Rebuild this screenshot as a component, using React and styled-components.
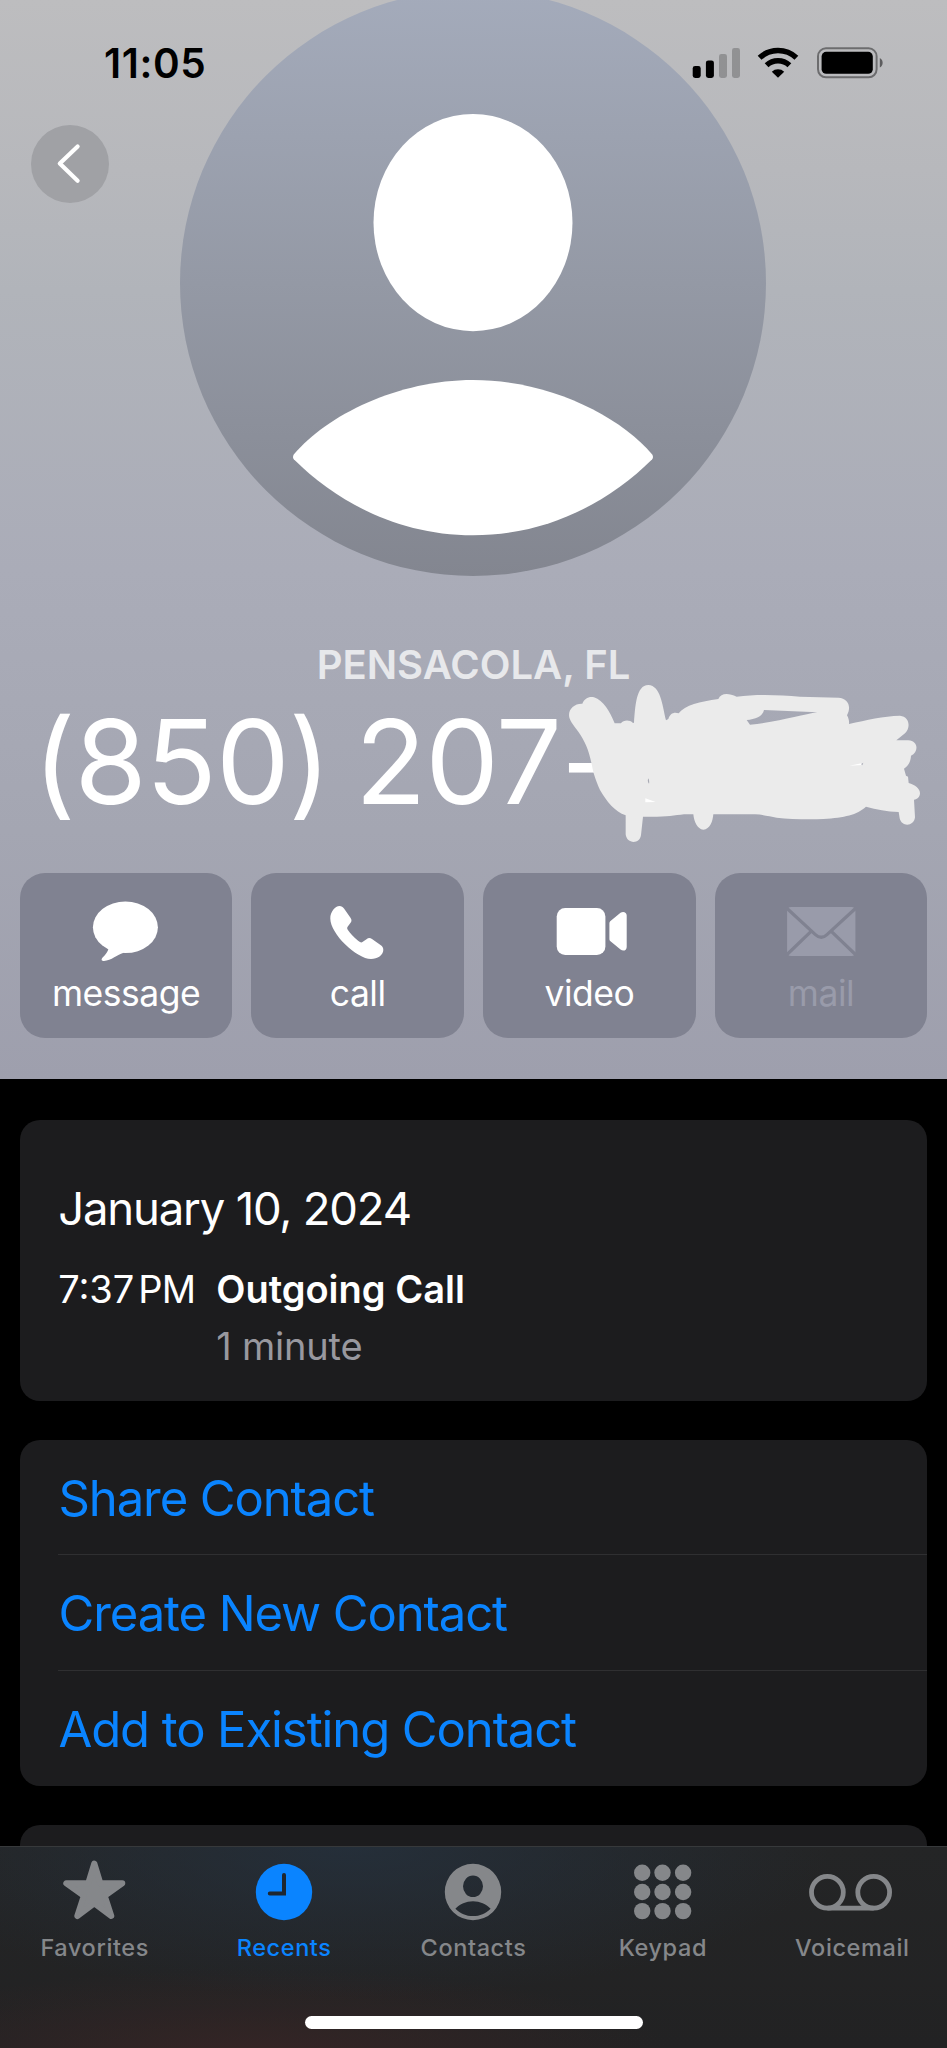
import React from 'react';
import styled, { createGlobalStyle } from 'styled-components';

const COLORS = {
  white: '#ffffff',
  black: '#000000',
  blue: '#0a84ff',
  card: '#1c1c1e',
  divider: '#2f2f31',
  secondary: '#98989f',
  tile: '#808291',
  tileDisabled: '#999baa',
  tab: '#85878a',
  scribble: '#ebebeb',
};

const actions = [
  { id: 'message', label: 'message' },
  { id: 'call', label: 'call' },
  { id: 'video', label: 'video' },
  { id: 'mail', label: 'mail', disabled: true },
];

const links = ['Share Contact', 'Create New Contact', 'Add to Existing Contact'];

const tabs = [
  { id: 'favorites', label: 'Favorites' },
  { id: 'recents', label: 'Recents', active: true },
  { id: 'contacts', label: 'Contacts' },
  { id: 'keypad', label: 'Keypad' },
  { id: 'voicemail', label: 'Voicemail' },
];

const App = () => (
  <Screen>
    <GlobalStyle />
    <Header>
      <Avatar />
      <Overlay>
        <StatusBar>
          <Time>11:05</Time>
          <StatusIcons />
        </StatusBar>
        <BackButton aria-label="Back">
          <svg width="78" height="78" viewBox="0 0 78 78">
            <path d="M46.6 21.5 28.8 38.5 46.6 55.7" fill="none" stroke="#fff" strokeWidth="4.2" strokeLinecap="round" strokeLinejoin="round" />
          </svg>
        </BackButton>
      </Overlay>
      <Location>PENSACOLA, FL</Location>
      <Phone>
        (850) 207-
        <Scribble />
      </Phone>
      <Actions>
        {actions.map(({ id, label, disabled }) => (
          <Action key={id} disabled={disabled}>
            <ActionIcon id={id} />
            {label}
          </Action>
        ))}
      </Actions>
    </Header>

    <Content>
      <CallCard>
        <CallDate>January 10, 2024</CallDate>
        <CallRow>
          <CallTime>
            7:37<Meridiem>PM</Meridiem>
          </CallTime>
          <div>
            <CallType>Outgoing Call</CallType>
            <CallDuration>1 minute</CallDuration>
          </div>
        </CallRow>
      </CallCard>
      <Card>
        {links.map((link) => (
          <LinkRow key={link}>{link}</LinkRow>
        ))}
      </Card>
      <NextCard />
    </Content>

    <TabBar>
      <Tabs>
        {tabs.map(({ id, label, active }) => (
          <Tab key={id} $active={active}>
            <TabIcon id={id} />
            {label}
          </Tab>
        ))}
      </Tabs>
      <HomeIndicator />
    </TabBar>
  </Screen>
);

const Avatar = () => (
  <AvatarSvg width="586" height="586" viewBox="0 0 586 586">
    <defs>
      <linearGradient id="avatar-fill" x1="0" y1="0" x2="0" y2="1">
        <stop offset="0" stopColor="#a4abbb" />
        <stop offset="0.5" stopColor="#9499a5" />
        <stop offset="1" stopColor="#838690" />
      </linearGradient>
    </defs>
    <circle cx="293" cy="293" r="293" fill="url(#avatar-fill)" />
    <ellipse cx="293" cy="232.6" rx="99.5" ry="108.6" fill="#fff" />
    <path
      d="M113.8 464.5C147 425 218 390 293 390S439 425 472.2 464.5Q473.8 467 472.2 469.2C429 512 368 545.3 293 545.3S157 512 113.8 469.2Q112.2 467 113.8 464.5Z"
      fill="#fff"
    />
  </AvatarSvg>
);

const StatusIcons = () => (
  <svg width="192" height="34" viewBox="0 0 192 34">
    <rect x="0.7" y="20" width="8" height="12" rx="2.4" />
    <rect x="13.9" y="14.4" width="8" height="17.6" rx="2.4" />
    <g opacity="0.22">
      <rect x="27" y="8" width="8" height="24" rx="2.4" />
      <rect x="40" y="2" width="8" height="30" rx="2.4" />
    </g>
    <g fill="none" stroke="#000" strokeWidth="5.6">
      <path d="M67.6 11.8A27 27 0 0 1 104.4 11.8" />
      <path d="M74.6 19.2A16.8 16.8 0 0 1 97.4 19.2" />
    </g>
    <path d="M86 31.7 79.8 25.7A9 9 0 0 1 92.2 25.7Z" />
    <rect x="126" y="2.3" width="58.6" height="29" rx="8" fill="none" stroke="#000" strokeOpacity="0.42" strokeWidth="2" />
    <rect x="129.6" y="5.8" width="51.2" height="22" rx="4.6" />
    <path d="M187.8 12C191.6 14 191.6 19.6 187.8 21.6Z" opacity="0.5" />
  </svg>
);

// marker strokes hiding the last four digits
const Scribble = () => (
  <ScribbleSvg width="407" height="200" viewBox="0 0 1221 600">
    <path
      fill={COLORS.scribble}
      fillRule="evenodd"
      d="M87 165C87 145 105 130 127 131C133 115 148 108 162 112C190 122 210 155 224 190L243 190C250 180 268 178 279 189L282 188C286 140 288 75 325 75C362 78 366 130 378 181L385 177C390 160 402 155 416 160C435 135 480 125 535 117C543 98 565 98 590 110C650 102 720 105 780 110L895 113C925 115 935 140 921 166C926 175 928 183 927 192C980 180 1030 168 1080 167C1110 170 1112 205 1095 220L1069 241L1105 241C1135 243 1137 275 1113 287C1112 305 1105 318 1092 326L1098 347L1104 350L1106 369C1125 375 1140 385 1140 400C1139 412 1132 418 1122 419L1125 472C1122 500 1085 502 1079 475L1076 456C1040 455 1010 448 978 440C950 465 915 472 850 477C800 479 750 477 710 473C690 470 670 464 645 463L520 463C518 485 510 508 490 509C472 508 462 485 460 463L432 463C400 467 370 472 309 470L303 525C300 553 260 553 257 523L257 466C225 455 200 425 180 390C165 355 160 340 155 312C145 265 135 245 115 215C100 195 87 180 87 165ZM620 180C645 178 668 170 672 150L832 157C790 163 720 185 630 194Z"
    />
    <path d="M316 415 347 426 316 427ZM928 317 968 309 966 315Z" fill="#fff" />
    <path d="M325 355Q329 363 327 371Q321 364 325 355ZM963 312 970 308 967 316Z" fill="#a9abb5" />
  </ScribbleSvg>
);

const ActionIcon = ({ id }) => (
  <svg width="76" height="60" viewBox="-3 0 76 60" fill="currentColor">
    {id === 'message' && (
      <>
        <ellipse cx="34.4" cy="26.3" rx="32.5" ry="25.8" />
        <path d="M17.5 47C17.2 51 14 54 11.4 56.8C9.8 59 10.8 60 13 60C20 59.4 27 53.6 32 52L34 46Z" />
      </>
    )}
    {id === 'call' && (
      <path d="M16.6 5C18.5 5 19.8 5.9 21 7.6L27.3 16.4C28.8 18.5 28.9 20 27.4 22L24.8 25.5C24 26.7 24 27.3 24.6 28.5C27 32.5 33 38.5 37 41C38 41.6 38.8 41.5 39.8 40.8L43.5 38.2C45.5 36.8 47 36.8 49 38L57.5 43.9C59.6 45.3 60.3 46.8 60.3 49C60.3 54 54.5 58 48 58C34 58 7.3 33 7.3 17.5C7.3 11 12 5 16.6 5Z" />
    )}
    {id === 'video' && (
      <>
        <rect x="2.7" y="7" width="48.7" height="47" rx="8.5" />
        <path d="M55.4 22.5C55.4 21.2 55.9 20.5 56.8 19.7L66.5 11.8C69 10 72.7 11 72.7 14.5V46C72.7 49.8 69 50.5 66.5 48.6L56.8 40.6C55.9 39.9 55.4 39 55.4 37.7Z" />
      </>
    )}
    {id === 'mail' && (
      <>
        <rect x="1.1" y="6" width="68.3" height="49" rx="4" />
        <g fill="none" stroke={COLORS.tile} strokeWidth="3.2">
          <path d="M0 6.5 29.4 33.6Q35.2 39 41 33.6L70.5 6.5" />
          <path d="M0 54.5 25.6 29.8M70.5 54.5 44.8 29.8" />
        </g>
      </>
    )}
  </svg>
);

const dots = [-19.3, 0, 19.1];

const TabIcon = ({ id }) => (
  <svg width="90" height="64" viewBox="-45 -32 90 64" fill="currentColor">
    {id === 'favorites' && (
      <path
        d="M-.7-28.5 5.4-8.7H27.3L9.8 3.9 16.3 24-.7 11.3-17.7 24-11.2 3.9-28.7-8.7H-6.8Z"
        stroke="currentColor"
        strokeWidth="6"
        strokeLinejoin="round"
      />
    )}
    {id === 'recents' && (
      <>
        <circle r="28.2" />
        <path d="M0-17V1.4H-14.2" fill="none" stroke="#1f272f" strokeWidth="4" strokeLinecap="round" />
      </>
    )}
    {id === 'contacts' && (
      <path
        fillRule="evenodd"
        d="M-28.2 0A28.2 28.2 0 1 1 28.2 0A28.2 28.2 0 1 1-28.2 0ZM-10-5.7A10 10.8 0 1 0 10-5.7A10 10.8 0 1 0-10-5.7ZM-17.6 16.7C-13 12-7 9.2 0 9.2S13 12 17.6 16.7C12.5 21.8 7 24 0 24S-12.5 21.8-17.6 16.7Z"
      />
    )}
    {id === 'keypad' &&
      dots.map((y) => [-20.8, -0.5, 20.1].map((x) => <circle key={x + y} cx={x} cy={y} r="8.2" />))}
    {id === 'voicemail' && (
      <g fill="none" stroke="currentColor" strokeWidth="4.8">
        <circle cx="-24.6" cy="0.3" r="15.9" />
        <circle cx="21.7" cy="0.3" r="15.9" />
        <path d="M-24.6 16.2H21.7" />
      </g>
    )}
  </svg>
);

const GlobalStyle = createGlobalStyle`
  * {
    box-sizing: border-box;
  }

  body {
    margin: 0;
    background: ${COLORS.black};
  }
`;

const Screen = styled.div`
  display: flex;
  flex-direction: column;
  width: 947px;
  height: 2048px;
  overflow: hidden;
  background: ${COLORS.black};
  color: ${COLORS.white};
  font-family: Inter, sans-serif;
  font-weight: 400;
`;

const Header = styled.header`
  position: relative;
  flex: none;
  display: flex;
  flex-direction: column;
  height: 1079px;
  overflow: hidden;
  background: linear-gradient(
    #bdbdbf 0,
    #b7b8bc 170px,
    #b1b4ba 290px,
    #aaacb8 570px,
    #a4a6b2 830px,
    #9e9fad 1079px
  );
`;

const AvatarSvg = styled.svg`
  flex: none;
  margin: -10px 0 0 180px;
`;

const Overlay = styled.div`
  position: absolute;
  top: 0;
  left: 0;
  width: 100%;
`;

const StatusBar = styled.div`
  display: flex;
  align-items: center;
  justify-content: space-between;
  height: 124.5px;
  padding: 1.5px 63px 0 104px;
`;

const Time = styled.span`
  color: ${COLORS.black};
  font-size: 40.5px;
  font-weight: 600;
  letter-spacing: 0.6px;
`;

const BackButton = styled.button`
  display: block;
  width: 78px;
  height: 78px;
  margin-left: 31.3px;
  padding: 0;
  border: none;
  border-radius: 50%;
  background: #a0a1a5;
`;

const Location = styled.div`
  margin-top: 65px;
  color: #e7e8eb;
  font-size: 40px;
  font-weight: 600;
  line-height: 48px;
  text-align: center;
`;

const Phone = styled.div`
  position: relative;
  margin-top: 7px;
  padding-left: 33px;
  font-size: 117px;
  letter-spacing: -1.1px;
  line-height: 131px;
  white-space: nowrap;
  word-spacing: -7px;
`;

const ScribbleSvg = styled.svg`
  position: absolute;
  top: -36px;
  right: 0;
`;

const Actions = styled.div`
  display: grid;
  grid-template-columns: repeat(4, 1fr);
  gap: 19px;
  margin-top: 46.3px;
  padding: 0 19.7px;
`;

const Action = styled.button`
  display: flex;
  flex-direction: column;
  align-items: center;
  gap: 12px;
  height: 164.4px;
  padding: 27.7px 0 0;
  border: none;
  border-radius: 25px;
  background: ${COLORS.tile};
  color: ${(p) => (p.disabled ? COLORS.tileDisabled : COLORS.white)};
  font-family: inherit;
  font-size: 35.5px;
  letter-spacing: -0.5px;
  line-height: 41px;
`;

const Content = styled.main`
  flex: 1;
  display: flex;
  flex-direction: column;
  gap: 39.2px;
  min-height: 0;
  padding: 41.3px 19.7px 0;
  overflow: hidden;
`;

const Card = styled.section`
  flex: none;
  border-radius: 20px;
  background: ${COLORS.card};
`;

const CallCard = styled(Card)`
  height: 280.3px;
  padding: 60.7px 38.5px 0;
`;

const NextCard = styled(Card)`
  height: 116px;
`;

const CallDate = styled.h2`
  margin: 0 0 24.3px;
  font-size: 45.5px;
  font-weight: 400;
  letter-spacing: -1.2px;
  line-height: 56px;
`;

const CallRow = styled.div`
  display: grid;
  grid-template-columns: 158px 1fr;
  font-size: 38px;
  line-height: 56.4px;
`;

const CallTime = styled.div`
  white-space: nowrap;
`;

const Meridiem = styled.span`
  margin-left: 4px;
  letter-spacing: -0.8px;
`;

const CallType = styled.div`
  font-weight: 600;
`;

const CallDuration = styled.div`
  color: ${COLORS.secondary};
  letter-spacing: -0.2px;
`;

const LinkRow = styled.div`
  margin-left: 38.8px;
  height: 115.5px;
  color: ${COLORS.blue};
  font-size: 49px;
  letter-spacing: -1.1px;
  line-height: 118px;

  &:not(:last-child) {
    border-bottom: 1px solid ${COLORS.divider};
  }
`;

const TabBar = styled.nav`
  flex: none;
  display: flex;
  flex-direction: column;
  align-items: center;
  height: 202px;
  border-top: 1px solid #37393b;
  background:
    radial-gradient(ellipse 480px 150px at 37% 0, rgba(37, 50, 64, 0.75), rgba(37, 50, 64, 0)),
    radial-gradient(ellipse 420px 90px at 27% 105%, rgba(60, 38, 38, 0.75), rgba(60, 38, 38, 0)),
    linear-gradient(#242526, #222223);
`;

const Tabs = styled.div`
  display: grid;
  grid-template-columns: repeat(5, 1fr);
  width: 100%;
`;

const Tab = styled.div`
  display: flex;
  flex-direction: column;
  align-items: center;
  gap: 8.5px;
  padding-top: 13px;
  color: ${(p) => (p.$active ? COLORS.blue : COLORS.tab)};
  font-size: 23.5px;
  font-weight: 500;
  letter-spacing: 0.6px;
  line-height: 30px;
`;

const HomeIndicator = styled.div`
  width: 338px;
  height: 12.6px;
  margin-top: 53.5px;
  border-radius: 7px;
  background: ${COLORS.white};
`;

export default App;
